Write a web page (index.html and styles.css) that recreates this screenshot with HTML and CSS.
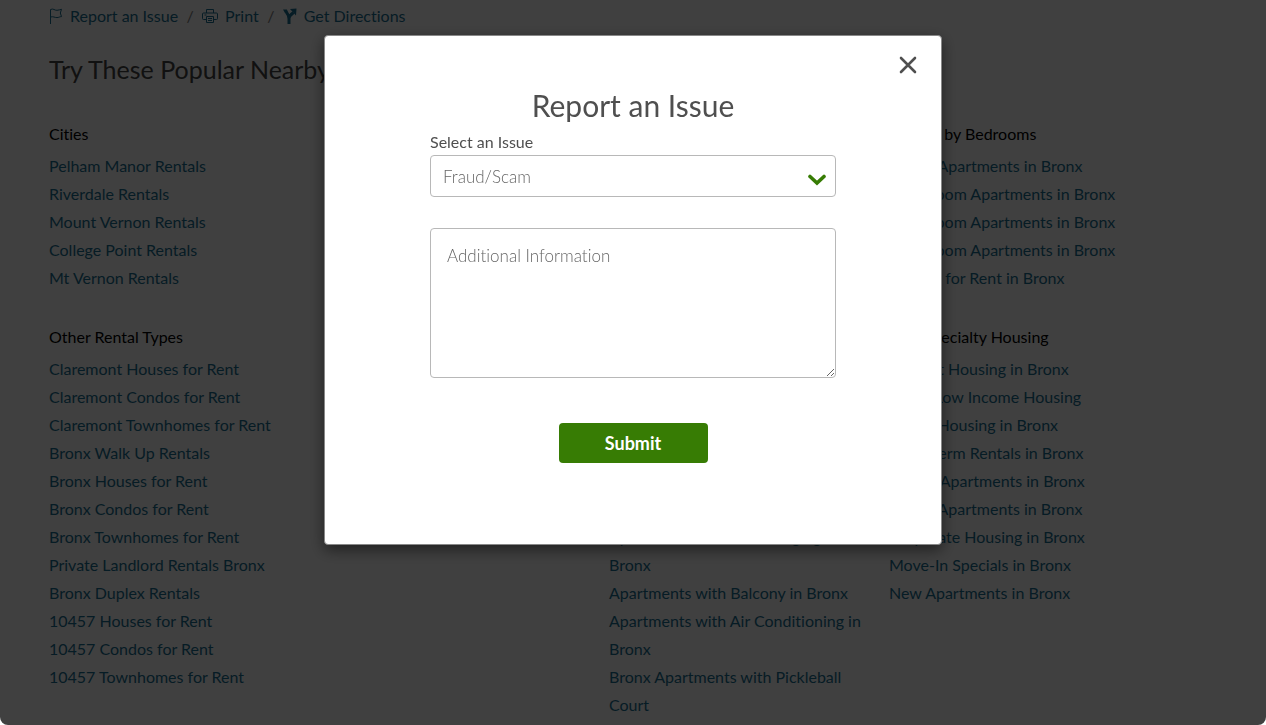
FILE: index.html
```html
<!DOCTYPE html>
<html lang="en">
<head>
  <meta charset="UTF-8" />
  <meta name="viewport" content="width=device-width, initial-scale=1.0" />
  <title>Report an Issue</title>
  <link rel="stylesheet" href="styles.css">
</head>
<body>
  <main class="page">
    <nav class="toolbar">
      <a href="#report">
        <svg class="icon-flag" viewBox="0 0 14 16" width="14" height="16"><path d="M1.500 16V1.500c3-1.400 4 1 6.500.8 1.800 0 2.800-.8 4.500-1L11.300 5l1.200 3.600c-2 0-2.700 1-4.500 1-2.500 0-3.500-1.400-6.500-.6" /></svg>
        <span>Report an Issue</span>
      </a>
      <span class="slash">/</span>
      <a href="#print">
        <svg class="icon-print" viewBox="0 0 16 16" width="16" height="16"><path d="M4.500 5V1.500h7V5M4 11.500H1.500a1 1 0 0 1-1-1V6a1 1 0 0 1 1-1h13a1 1 0 0 1 1 1v4.500a1 1 0 0 1-1 1H12M4.500 8.500h7v6h-7zM6 10.500h4M6 12.500h4M2.500 7h2" /></svg>
        <span>Print</span>
      </a>
      <span class="slash">/</span>
      <a href="#directions">
        <svg class="icon-directions" viewBox="0 0 14 16" width="14" height="16"><path class="line" d="M6 16V10.500c0-2.500 2-4 4.500-6M6 11c0-3-1-5-3-7.500" /><path class="tip" d="M7 1L13.500.5 13 7.500zM0 1.500L4 1.500 4.500 4 2 5z" /></svg>
        <span>Get Directions</span>
      </a>
    </nav>

    <h2 class="page-title">Try These Popular Nearby Searches</h2>

    <div class="link-grid">
      <section>
        <h3>Cities</h3>
        <ul>
          <li><a href="#">Pelham Manor Rentals</a></li>
          <li><a href="#">Riverdale Rentals</a></li>
          <li><a href="#">Mount Vernon Rentals</a></li>
          <li><a href="#">College Point Rentals</a></li>
          <li><a href="#">Mt Vernon Rentals</a></li>
        </ul>
      </section>
      <section class="col-4">
        <h3>Rentals by Bedrooms</h3>
        <ul>
          <li><a href="#">Studio Apartments in Bronx</a></li>
          <li><a href="#">1 Bedroom Apartments in Bronx</a></li>
          <li><a href="#">2 Bedroom Apartments in Bronx</a></li>
          <li><a href="#">3 Bedroom Apartments in Bronx</a></li>
          <li><a href="#">Houses for Rent in Bronx</a></li>
        </ul>
      </section>
      <section>
        <h3>Other Rental Types</h3>
        <ul>
          <li><a href="#">Claremont Houses for Rent</a></li>
          <li><a href="#">Claremont Condos for Rent</a></li>
          <li><a href="#">Claremont Townhomes for Rent</a></li>
          <li><a href="#">Bronx Walk Up Rentals</a></li>
          <li><a href="#">Bronx Houses for Rent</a></li>
          <li><a href="#">Bronx Condos for Rent</a></li>
          <li><a href="#">Bronx Townhomes for Rent</a></li>
          <li><a href="#">Private Landlord Rentals Bronx</a></li>
          <li><a href="#">Bronx Duplex Rentals</a></li>
          <li><a href="#">10457 Houses for Rent</a></li>
          <li><a href="#">10457 Condos for Rent</a></li>
          <li><a href="#">10457 Townhomes for Rent</a></li>
        </ul>
      </section>
      <section class="col-3">
        <h3>Amenities</h3>
        <ul>
          <li><a href="#">Pet Friendly Apartments in Bronx</a></li>
          <li><a href="#">Furnished Apartments in Bronx</a></li>
          <li><a href="#">Apartments with Parking in Bronx</a></li>
          <li><a href="#">Apartments with Pool in Bronx</a></li>
          <li><a href="#">Apartments with Gym in Bronx</a></li>
          <li><a href="#">Bronx Apartments with Utilities</a></li>
          <li><a href="#">Apartments with Car Charging in Bronx</a></li>
          <li><a href="#">Apartments with Balcony in Bronx</a></li>
          <li><a href="#">Apartments with Air Conditioning in Bronx</a></li>
          <li><a href="#">Bronx Apartments with Pickleball Court</a></li>
        </ul>
      </section>
      <section class="col-4">
        <h3>Find Specialty Housing</h3>
        <ul>
          <li><a href="#">Student Housing in Bronx</a></li>
          <li><a href="#">Bronx Low Income Housing</a></li>
          <li><a href="#">Senior Housing in Bronx</a></li>
          <li><a href="#">Short Term Rentals in Bronx</a></li>
          <li><a href="#">Luxury Apartments in Bronx</a></li>
          <li><a href="#">Cheap Apartments in Bronx</a></li>
          <li><a href="#">Corporate Housing in Bronx</a></li>
          <li><a href="#">Move-In Specials in Bronx</a></li>
          <li><a href="#">New Apartments in Bronx</a></li>
        </ul>
      </section>
    </div>
  </main>

  <div class="overlay">
    <div class="modal" role="dialog" aria-modal="true" aria-labelledby="modal-title">
      <button class="close" type="button" aria-label="Close">
        <svg viewBox="0 0 18 18" width="18" height="18"><path d="M2 2l14 14M16 2L2 16" /></svg>
      </button>
      <h1 id="modal-title">Report an Issue</h1>
      <form class="issue-form">
        <label for="issue">Select an Issue</label>
        <div class="select-wrap">
          <select id="issue">
            <option>Fraud/Scam</option>
          </select>
          <svg class="chevron" viewBox="0 0 18 12" width="18" height="12"><path d="M2 2.500l7 6.500 7-6.500" /></svg>
        </div>
        <textarea aria-label="Additional Information" placeholder="Additional Information"></textarea>
        <button class="submit" type="submit">Submit</button>
      </form>
    </div>
  </div>
</body>
</html>
```

FILE: styles.css
```css
* {
  box-sizing: border-box;
}
html, body {
  margin: 0;
  padding: 0;
  height: 100%;
  background: #fff;
  overflow: hidden;
}
body, button, select, textarea {
  font-family: Lato, "Open Sans", sans-serif;
  font-size: 16px;
  font-variant-ligatures: none;
}
a {
  color: #1a6f92;
  text-decoration: none;
}
.page {
  padding: 2px 97px 0 49px;
}

/* toolbar */
.toolbar {
  display: flex;
  align-items: center;
  line-height: 28px;
}
.toolbar a {
  display: flex;
  align-items: center;
  gap: 7px;
}
.toolbar svg {
  fill: none;
  stroke: #1a6f92;
}
.toolbar .icon-directions .line {
  stroke-width: 3;
}
.toolbar .icon-directions .tip {
  fill: #1a6f92;
  stroke: none;
}
.slash {
  width: 24px;
  text-align: center;
  color: #808080;
}

.page-title {
  margin: 23px 0 37px;
  font-size: 25px;
  font-weight: 400;
  line-height: 32px;
  color: #444;
}

/* link columns */
.link-grid {
  display: grid;
  grid-template-columns: repeat(4, 1fr);
  row-gap: 33px;
}
.link-grid section {
  grid-column: 1;
  padding-right: 20px;
}
.link-grid .col-3 {
  grid-column: 3;
}
.link-grid .col-4 {
  grid-column: 4;
}
.link-grid h3 {
  margin: 0 0 6px;
  font-size: 16px;
  font-weight: 400;
  line-height: 24px;
  color: #000;
}
.link-grid ul {
  margin: 0;
  padding: 0;
  list-style: none;
  line-height: 28px;
}

/* modal */
.overlay {
  position: fixed;
  inset: 0;
  display: flex;
  justify-content: center;
  align-items: flex-start;
  padding: 35px 16px;
  background: rgba(0, 0, 0, 0.75);
  border-radius: 0 0 8px 8px;
}
.modal {
  position: relative;
  width: 100%;
  max-width: 618px;
  padding: 48px 105px 81px;
  background: #fff;
  border: 1px solid #888;
  border-radius: 4px;
  box-shadow: 0 5px 15px rgba(0, 0, 0, 0.5);
  color: #4f4f4f;
}
.close {
  position: absolute;
  top: 16px;
  right: 20px;
  display: flex;
  padding: 4px;
  background: none;
  border: 0;
}
.close svg {
  fill: none;
  stroke: #4f4f4f;
  stroke-width: 2.6;
  stroke-linecap: round;
}
.modal h1 {
  margin: 0 0 3px;
  font-size: 30px;
  font-weight: 400;
  line-height: 42px;
  text-align: center;
}
.issue-form {
  display: flex;
  flex-direction: column;
}
.issue-form label {
  line-height: 26px;
}
.select-wrap {
  position: relative;
}
.issue-form select,
.issue-form textarea {
  display: block;
  width: 100%;
  background: #fff;
  border: 1px solid #b8b8b8;
  border-radius: 4px;
  font-size: 17px;
  font-weight: 300;
  color: #666;
}
.issue-form select {
  height: 42px;
  padding: 0 12px;
  appearance: none;
}
.chevron {
  position: absolute;
  top: 19px;
  right: 10px;
  fill: none;
  stroke: #377c04;
  stroke-width: 3.6;
  stroke-linecap: round;
  pointer-events: none;
}
.issue-form textarea {
  height: 150px;
  margin-top: 31px;
  padding: 16px;
  line-height: 22px;
}
.issue-form textarea::placeholder {
  color: #666;
}
.submit {
  align-self: center;
  width: 149px;
  height: 40px;
  margin-top: 45px;
  background: #377c04;
  border: 0;
  border-radius: 4px;
  color: #fff;
  font-size: 18px;
  font-weight: 700;
}
```
